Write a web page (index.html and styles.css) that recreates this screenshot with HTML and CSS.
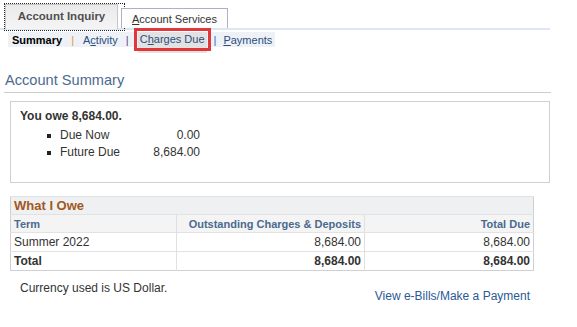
FILE: index.html
```html
<!DOCTYPE html>
<html>
<head>
<meta charset="utf-8">
<link rel="stylesheet" href="styles.css">
</head>
<body>
<div class="page">
  <div class="tabs">
    <div class="tab active"><span>Account Inquiry</span></div>
    <div class="tab"><span><u>A</u>ccount Services</span></div>
  </div>
  <div class="subnav">
    <span class="sub current">Summary</span>
    <span class="sep orange">|</span>
    <span class="sub">A<u>c</u>tivity</span>
    <span class="sep purple">|</span>
    <span class="sub hl">C<u>h</u>arges Due</span>
    <span class="sep blue">|</span>
    <span class="sub"><u>P</u>ayments</span>
  </div>
  <h1 class="title">Account Summary</h1>
  <div class="owebox">
    <div class="owe">You owe 8,684.00.</div>
    <ul class="duelist">
      <li><span class="lbl">Due Now</span><span class="amt">0.00</span></li>
      <li><span class="lbl">Future Due</span><span class="amt">8,684.00</span></li>
    </ul>
  </div>
  <table class="grid">
    <colgroup><col class="c1"><col class="c2"><col class="c3"></colgroup>
    <tr><td class="gtitle" colspan="3">What I Owe</td></tr>
    <tr class="ghead"><th class="left">Term</th><th class="mid">Outstanding Charges &amp; Deposits</th><th>Total Due</th></tr>
    <tr class="row"><td class="left">Summer 2022</td><td class="mid">8,684.00</td><td>8,684.00</td></tr>
    <tr class="row total"><td class="left">Total</td><td class="mid">8,684.00</td><td>8,684.00</td></tr>
  </table>
  <div class="footer">
    <span class="currency">Currency used is US Dollar.</span>
    <a class="link">View e-Bills/Make a Payment</a>
  </div>
</div>
</body>
</html>
```

FILE: styles.css
```css
html, body { margin: 0; padding: 0; background: #fff; }
body { font-family: "Liberation Sans", Arial, sans-serif; font-size: 12px; color: #333; }
.page { width: 577px; height: 327px; position: relative; white-space: nowrap; }

.tabs {
  display: flex; align-items: flex-end; gap: 3px;
  padding: 5px 0 0 5px; height: 23px;
  border-bottom: 2px solid #dce6f4; width: 545px;
}
.tab {
  box-sizing: border-box; display: flex; align-items: center; justify-content: center;
  font-size: 11px; color: #333; white-space: nowrap;
}
.tab.active {
  position: relative;
  width: 113px; height: 25px; margin-bottom: -1px;
  font-weight: bold; font-size: 11.5px; color: #4f4f4f; padding-bottom: 2px;
  background: linear-gradient(#eaeaea, #f5f5f5);
  border: 1px solid #c6c6c6; border-bottom: none;
}
.tab.active::after {
  content: ""; position: absolute; left: -2px; top: -2px; width: 119px; height: 26px;
  border: 1px dotted #222; pointer-events: none;
}
.tab:not(.active) {
  position: relative; z-index: 1;
  width: 107px; height: 20px; background: #fdfdfd;
  border: 1px solid #adb1c4; border-bottom: none;
}

.subnav {
  margin: 2px 0 0 8px; width: 263px; height: 15px; background: #eef2f7;
  display: flex; align-items: center; padding-left: 4px; font-size: 11px;
}
.sub { color: #2b4d80; }
.sub.current { color: #000; font-weight: bold; }
.sep.orange { color: #e19a2a; margin: 0 9px 0 9px; }
.sep.purple { color: #6a3b8f; margin: 0 9px 0 8px; }
.sep.blue { color: #2b6ccc; margin: 0 7px 0 7px; }
.sub.hl {
  position: relative;
  background: #e2e2e2; padding: 0 2px;
  outline: 3px solid #e0383a; outline-offset: 1px;
  line-height: 15px; height: 15px;
  box-shadow: 0 6px 0 0 #e2e2e2;
}

.title {
  margin: 24px 0 0 4px; width: 546px; font-size: 14.6px; font-weight: normal; color: #4b6a8e;
  border-bottom: 1px solid #cdcdcd; padding: 0 0 3px 1px; line-height: 18px;
}
.owebox {
  margin: 8px 0 0 10px; width: 540px; height: 82px; box-sizing: border-box;
  border: 1px solid #cfd0d4; padding: 7px 0 0 9px;
}
.owe { font-weight: bold; color: #333; font-size: 12px; }
.duelist { margin: 3px 0 0 0; padding: 0 0 0 40px; list-style: none; }
.duelist li { display: flex; height: 17px; align-items: center; position: relative; }
.duelist li::before {
  content: ""; position: absolute; left: -13px; top: 8px; width: 4px; height: 4px; background: #222;
}
.lbl { width: 80px; }
.amt { width: 60px; text-align: right; }

.grid {
  margin: 13px 0 0 10px; width: 524px; border-collapse: collapse; table-layout: fixed;
  border: 1px solid #cfd0d4; font-size: 12px;
}
.grid td, .grid th { height: 17px; padding: 0 3px; text-align: right; border-top: 1px solid #e2e2e2; white-space: nowrap; }
.grid .row td { height: 18px; }
.grid .left { text-align: left; border-right: 1px solid #e0e0e0; }
.grid .mid { border-right: 1px solid #e0e0e0; }
.gtitle { background: #eef0f2; color: #a4571c; font-weight: bold; font-size: 13px; text-align: left !important; }
.ghead th { background: #f4f4f4; color: #4a6a8f; font-weight: bold; font-size: 11px; }
.c1 { width: 166px; }
.c2 { width: 188px; }
.total td { font-weight: bold; }

.footer { display: flex; justify-content: space-between; margin: 10px 0 0 20px; width: 510px; }
.currency { color: #333; }
.link { color: #2b5996; margin-top: 8px; }
```
